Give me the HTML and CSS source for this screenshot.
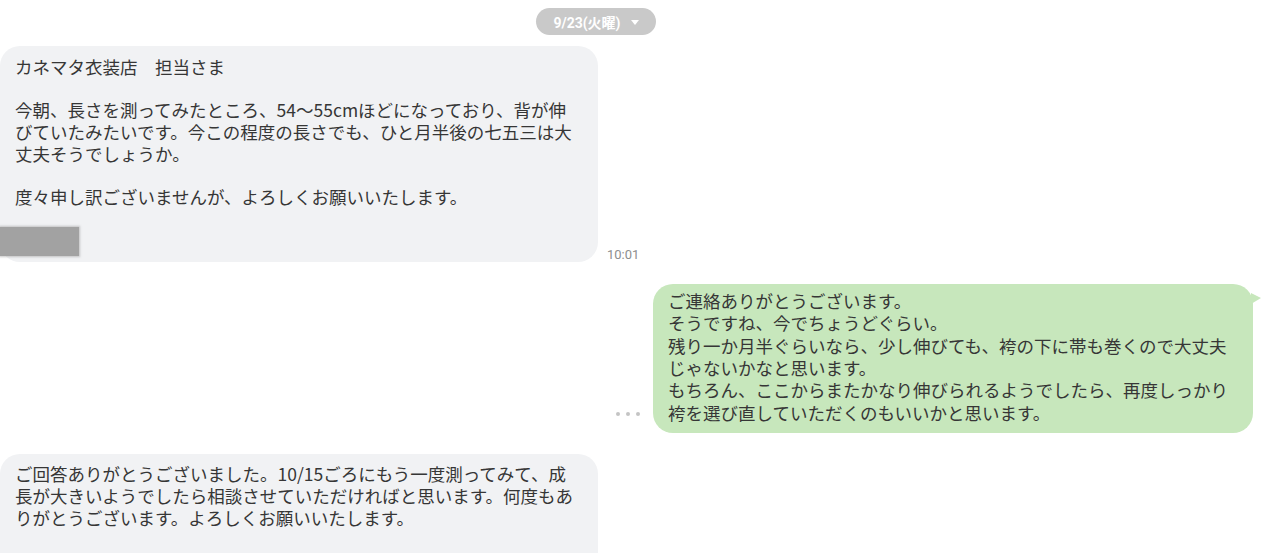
FILE: index.html
```html
<!DOCTYPE html>
<html lang="ja">
<head>
<meta charset="utf-8">
<title>chat</title>
<link rel="stylesheet" href="styles.css">
</head>
<body>
<div class="chat">
  <div class="date-row">
    <div class="date-pill"><span>9/23(火曜)</span><span class="caret"></span></div>
  </div>

  <div class="row row-first">
    <div class="bubble gray">
      <div class="text">
        <span class="ln">カネマタ衣装店　担当さま</span>
        <span class="ln blank"></span>
        <span class="ln">今朝、長さを測ってみたところ、54～55cmほどになっており、背が伸</span>
        <span class="ln">びていたみたいです。今この程度の長さでも、ひと月半後の七五三は大</span>
        <span class="ln">丈夫そうでしょうか。</span>
        <span class="ln blank"></span>
        <span class="ln">度々申し訳ございませんが、よろしくお願いいたします。</span>
      </div>
      <div class="sig"></div>
    </div>
    <div class="time">10:01</div>
  </div>

  <div class="row row-right">
    <div class="dots"><span></span><span></span><span></span></div>
    <div class="bubble green">
      <div class="text">
        <span class="ln">ご連絡ありがとうございます。</span>
        <span class="ln">そうですね、今でちょうどぐらい。</span>
        <span class="ln">残り一か月半ぐらいなら、少し伸びても、袴の下に帯も巻くので大丈夫</span>
        <span class="ln">じゃないかなと思います。</span>
        <span class="ln">もちろん、ここからまたかなり伸びられるようでしたら、再度しっかり</span>
        <span class="ln">袴を選び直していただくのもいいかと思います。</span>
      </div>
    </div>
  </div>

  <div class="row row-third">
    <div class="bubble gray tall">
      <div class="text">
        <span class="ln">ご回答ありがとうございました。10/15ごろにもう一度測ってみて、成</span>
        <span class="ln">長が大きいようでしたら相談させていただければと思います。何度もあ</span>
        <span class="ln">りがとうございます。よろしくお願いいたします。</span>
      </div>
    </div>
  </div>
</div>
</body>
</html>
```

FILE: styles.css
```css
* { box-sizing: border-box; }

html, body {
  margin: 0;
  padding: 0;
  background: #ffffff;
  overflow: hidden;
}

body {
  font-family: "Noto Sans CJK JP", "Noto Sans", sans-serif;
  color: #363636;
  width: 1276px;
  height: 553px;
}

.chat {
  display: flex;
  flex-direction: column;
  padding-top: 8px;
}

.date-row {
  width: 1192px;
  display: flex;
  justify-content: center;
}

.date-pill {
  height: 27px;
  padding: 0 17px 0 17px;
  border-radius: 14px;
  background: #c9c9c9;
  color: #ffffff;
  font-family: Roboto, "Noto Sans CJK JP", sans-serif;
  font-weight: 700;
  font-size: 14px;
  display: flex;
  align-items: center;
  gap: 10px;
}

.caret {
  width: 0;
  height: 0;
  border-left: 4px solid transparent;
  border-right: 4px solid transparent;
  border-top: 5px solid #ffffff;
  margin-top: 1px;
}

.row {
  display: flex;
  align-items: flex-end;
}

.row-first { margin-top: 11px; gap: 9px; }
.row-right { margin-top: 22px; justify-content: flex-end; padding-right: 23px; gap: 13px; }
.row-third { margin-top: 21px; }

.bubble {
  border-radius: 20px;
  font-size: 17.5px;
}

.text {
  display: flex;
  flex-direction: column;
  white-space: nowrap;
}

.ln {
  display: block;
  overflow: visible;
}

.gray {
  width: 598px;
  background: #f1f2f4;
  padding: 10px 15px 6px 15px;
}

.gray .ln { height: 21.7px; line-height: 21.7px; }

.tall {
  padding-top: 9px;
  height: 99px;
  border-bottom-left-radius: 0;
  border-bottom-right-radius: 0;
}

.sig {
  width: 79px;
  height: 29px;
  margin: 19px 0 0 -15px;
  background: #a2a2a2;
  box-shadow: 0 0 2px 1px rgba(162, 162, 162, 0.6);
}

.time {
  font-family: Roboto, "Liberation Sans", sans-serif;
  font-size: 13px;
  color: #8e8e8e;
  line-height: 14px;
}

.green {
  position: relative;
  width: 600px;
  background: #c7e7bc;
  padding: 6px 15px 9px 15px;
}

.green .ln { height: 22.4px; line-height: 22.4px; }

.green::after {
  content: "";
  position: absolute;
  right: -8px;
  top: 9px;
  width: 0;
  height: 0;
  border-left: 10px solid #c7e7bc;
  border-top: 5px solid transparent;
  border-bottom: 6px solid transparent;
}

.dots {
  display: flex;
  gap: 6px;
  margin-bottom: 17px;
}

.dots span {
  width: 4px;
  height: 4px;
  border-radius: 50%;
  background: #c4c4c4;
}
```
